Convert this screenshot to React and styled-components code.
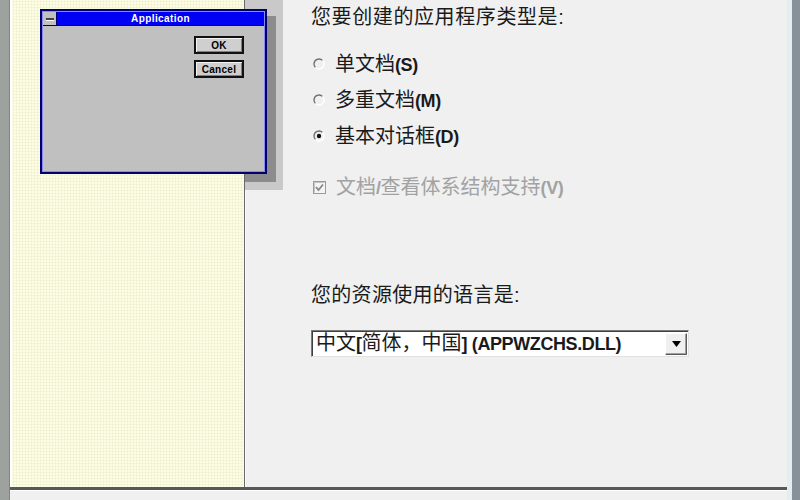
import React from "react";
import styled, { createGlobalStyle } from "styled-components";

const GlobalStyle = createGlobalStyle`
  html, body {
    margin: 0;
    padding: 0;
    overflow: hidden;
    background: #f0f0f0;
  }
`;

const options = [
  { label: "单文档", key: "(S)", checked: false },
  { label: "多重文档", key: "(M)", checked: false },
  { label: "基本对话框", key: "(D)", checked: true },
];

const Radio = ({ checked }) => (
  <svg width="12" height="12" viewBox="0 0 12 12">
    <path d="M9.5 2.5 A5 5 0 0 0 1 6 A5 5 0 0 0 2.5 9.5" fill="none" stroke="#6e6e6e" strokeWidth="1.3" />
    <path d="M2.5 9.5 A5 5 0 0 0 11 6 A5 5 0 0 0 9.5 2.5" fill="none" stroke="#ffffff" strokeWidth="1.3" />
    {checked && <circle cx="6" cy="6" r="2.2" fill="#111" />}
  </svg>
);

const CheckMark = () => (
  <svg width="13" height="13" viewBox="0 0 13 13">
    <rect x="0.5" y="0.5" width="12" height="12" fill="#f4f4f4" stroke="#9a9a9a" />
    <path d="M1.5 1.5 H11.5 M1.5 1.5 V11.5" stroke="#c4c4c4" />
    <path d="M3 6 L5.5 9 L10 3.5" fill="none" stroke="#8a8a8a" strokeWidth="1.9" />
  </svg>
);

const App = () => {
  return (
    <>
      <GlobalStyle />
      <Screen>
        <LeftEdge />
        <Frame>
          <MainRow>
            <SidePane />
            <ContentPane>
              <Heading>您要创建的应用程序类型是:</Heading>
              <OptionList>
                {options.map((o) => (
                  <OptionRow key={o.key}>
                    <Radio checked={o.checked} />
                    <span>
                      {o.label}
                      <Latin>{o.key}</Latin>
                    </span>
                  </OptionRow>
                ))}
              </OptionList>
              <OptionRow $disabled>
                <CheckMark />
                <span>
                  文档<Latin>/</Latin>查看体系结构支持<Latin>(V)</Latin>
                </span>
              </OptionRow>
              <LangLabel>您的资源使用的语言是:</LangLabel>
              <Combo>
                <ComboText>
                  中文<Latin>[</Latin>简体，中国<Latin>] (APPWZCHS.DLL)</Latin>
                </ComboText>
                <ComboButton>
                  <svg width="9" height="6" viewBox="0 0 9 6">
                    <path d="M0 0 H9 L4.5 6 Z" fill="#000" />
                  </svg>
                </ComboButton>
              </Combo>
            </ContentPane>
          </MainRow>
          <BottomLine />
          <BottomStrip />

          <Preview>
            <Backdrop />
            <ShadowLight />
            <ShadowDark />
            <Window>
              <TitleBar>
                <SysBox>
                  <span />
                </SysBox>
                <Title>Application</Title>
              </TitleBar>
              <WindowBody>
                <DlgButton>OK</DlgButton>
                <DlgButton>Cancel</DlgButton>
              </WindowBody>
            </Window>
          </Preview>
        </Frame>
        <RightEdge />
      </Screen>
    </>
  );
};

const Screen = styled.div`
  width: 800px;
  height: 500px;
  display: flex;
  font-family: "Liberation Sans", "Noto Sans CJK SC", sans-serif;
  color: #1a1a1a;
`;

const LeftEdge = styled.div`
  width: 9px;
  background: #9ea29f;
  border-right: 1px solid #7f8481;
`;

const RightEdge = styled.div`
  width: 8px;
  background: #87919a;
  border-left: 5px solid #e4eef2;
`;

const Frame = styled.div`
  flex: 1;
  position: relative;
  display: flex;
  flex-direction: column;
`;

const MainRow = styled.div`
  height: 487px;
  display: flex;
`;

const SidePane = styled.div`
  width: 232px;
  border-left: 2px solid #ffffff;
  border-right: 1px solid #6a6a6a;
  background-color: #fcfce4;
  background-image: radial-gradient(#ececc6 0.8px, transparent 1.1px);
  background-size: 3px 3px;
`;

const ContentPane = styled.div`
  flex: 1;
  background: #f0f0f0;
  border-left: 1px solid #fafafa;
  padding: 4px 0 0 65px;
  font-size: 20px;
  line-height: 26px;
`;

const Heading = styled.div`
  height: 26px;
  letter-spacing: 0.6px;
`;

const OptionList = styled.div`
  margin-top: 21px;
  display: flex;
  flex-direction: column;
  gap: 10px;
  margin-bottom: 25px;
`;

const OptionRow = styled.div`
  height: 26px;
  display: flex;
  align-items: center;
  gap: 10px;
  margin-left: 2px;
  color: ${(p) => (p.$disabled ? "#a2a2a2" : "#1a1a1a")};
  span {
    line-height: 26px;
  }
`;

const Latin = styled.span`
  font-weight: 700;
  font-size: 18px;
  letter-spacing: -0.4px;
`;

const LangLabel = styled.div`
  height: 26px;
  margin-top: 82px;
  letter-spacing: 0.3px;
`;

const Combo = styled.div`
  margin-top: 22px;
  width: 378px;
  height: 27px;
  box-sizing: border-box;
  display: flex;
  align-items: center;
  justify-content: space-between;
  background: #ffffff;
  border: 1px solid;
  border-color: #7a7a7a #e0e0e0 #e0e0e0 #7a7a7a;
  box-shadow: inset 1px 1px 0 #404040;
  padding: 1px 1px 1px 4px;
`;

const ComboText = styled.span`
  line-height: 24px;
  white-space: nowrap;
`;

const ComboButton = styled.div`
  width: 22px;
  height: 22px;
  box-sizing: border-box;
  display: flex;
  align-items: center;
  justify-content: center;
  background: #f0f0f0;
  border: 1px solid;
  border-color: #ffffff #5a5a5a #5a5a5a #ffffff;
  box-shadow: inset -1px -1px 0 #a0a0a0;
`;

const BottomLine = styled.div`
  height: 3px;
  background: #585858;
`;

const BottomStrip = styled.div`
  flex: 1;
  background: #f0f0f0;
  border-top: 1px solid #ffffff;
`;

/* picture of the dialog preview, laid over both panes */
const Preview = styled.div`
  position: absolute;
  left: 0;
  top: 0;
  width: 280px;
  height: 190px;
`;

const Backdrop = styled.div`
  position: absolute;
  left: 235px;
  top: 0;
  width: 38px;
  height: 190px;
  background: #c9c9c9;
`;

const ShadowLight = styled.div`
  position: absolute;
  left: 38px;
  top: 164px;
  width: 197px;
  height: 8px;
  background: #c2c2bf;
`;

const ShadowDark = styled.div`
  position: absolute;
  left: 235px;
  top: 16px;
  width: 31px;
  height: 166px;
  background: #8c8c8c;
`;

const Window = styled.div`
  position: absolute;
  left: 30px;
  top: 9px;
  width: 227px;
  height: 165px;
  box-sizing: border-box;
  border: 2px solid #00006e;
  padding: 1px;
  background: #8a8af0;
  display: flex;
  flex-direction: column;
`;

const TitleBar = styled.div`
  height: 13px;
  display: flex;
  background: #0000f4;
  border-bottom: 1px solid #00006e;
`;

const SysBox = styled.div`
  width: 13px;
  background: #c0c0c0;
  border-right: 1px solid #00006e;
  display: flex;
  align-items: center;
  justify-content: center;
  span {
    width: 8px;
    height: 2px;
    background: #404040;
    box-shadow: 0 1px 0 #fff;
  }
`;

const Title = styled.div`
  flex: 1;
  text-align: center;
  color: #ffffff;
  font-weight: 700;
  font-size: 10px;
  line-height: 13px;
  letter-spacing: 0.4px;
`;

const WindowBody = styled.div`
  flex: 1;
  background: #c0c0c0;
  display: flex;
  flex-direction: column;
  align-items: flex-end;
  gap: 6px;
  padding: 10px 20px 0 0;
`;

const DlgButton = styled.div`
  width: 50px;
  height: 18px;
  box-sizing: border-box;
  border: 2px solid #111;
  background: #cfcfcf;
  box-shadow: inset 1px 1px 0 #f4f4f4, inset -1px -1px 0 #808080;
  display: flex;
  align-items: center;
  justify-content: center;
  font-weight: 700;
  font-size: 10px;
  color: #000;
  letter-spacing: 0.3px;
`;

export default App;
